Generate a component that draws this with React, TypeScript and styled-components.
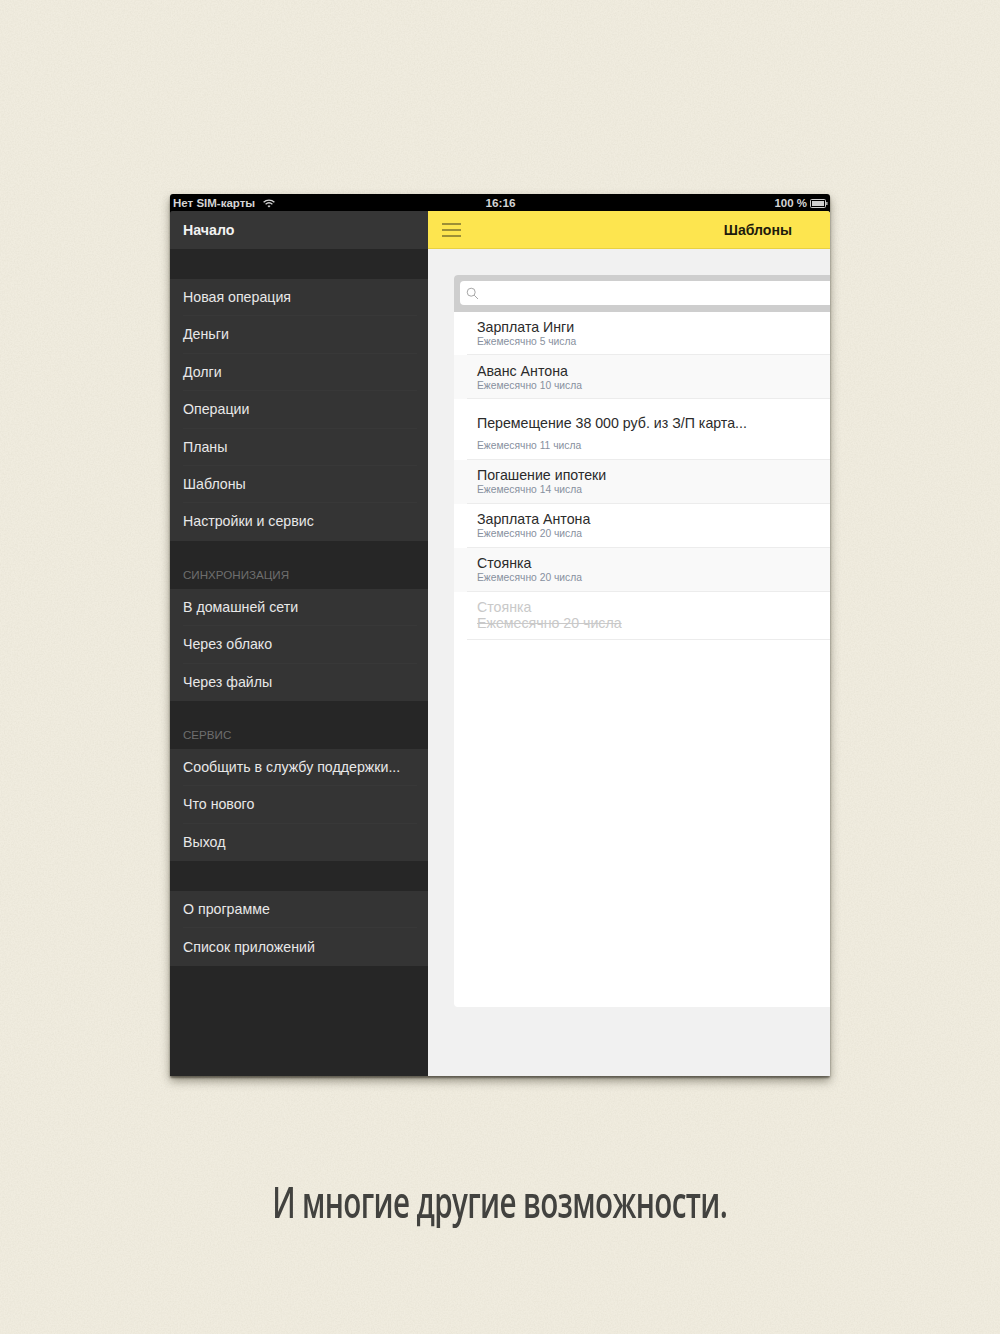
import React from "react";
import styled, { createGlobalStyle } from "styled-components";

const Global = createGlobalStyle`
  html, body { margin: 0; padding: 0; background: #f0ecdf; }
  * { box-sizing: border-box; }
  body { font-family: "Liberation Sans", Arial, sans-serif; -webkit-font-smoothing: antialiased; }
`;

const Page = styled.div`
  position: relative;
  width: 1000px;
  height: 1334px;
  overflow: hidden;
  padding-top: 194px;
  display: flex;
  flex-direction: column;
  align-items: center;
  background: #f0ecdf;
`;
const Paper = styled.svg`
  position: absolute;
  inset: 0;
  width: 1000px;
  height: 1334px;
  opacity: 0.22;
  pointer-events: none;
`;
const Device = styled.div`
  position: relative;
  width: 660px;
  height: 882px;
  display: flex;
  flex-direction: column;
  background: #000;
  border-radius: 3px 3px 2px 2px;
  box-shadow: 0 2px 2px rgba(40, 36, 25, 0.55), 0 5px 10px rgba(60, 55, 40, 0.5);
`;
const StatusBar = styled.div`
  height: 17px;
  flex: none;
  display: grid;
  grid-template-columns: 1fr auto 1fr;
  align-items: center;
  padding: 1px 2px 0 3px;
  color: #d4d4d4;
  font-size: 11.5px;
  font-weight: bold;
`;
const StatusLeft = styled.div`
  display: flex;
  align-items: center;
  gap: 8px;
`;
const StatusRight = styled.div`
  display: flex;
  align-items: center;
  justify-content: flex-end;
  gap: 3px;
`;
const Time = styled.div`
  font-size: 11.8px;
`;
const Body = styled.div`
  flex: 1;
  display: flex;
  min-height: 0;
`;
const Sidebar = styled.nav`
  width: 258px;
  flex: none;
  display: flex;
  flex-direction: column;
  background: #262626;
  border-radius: 3px 0 0 0;
  overflow: hidden;
`;
const SideHeader = styled.div`
  height: 38px;
  flex: none;
  display: flex;
  align-items: center;
  padding: 0 13px;
  background: #363636;
  color: #f2f2f2;
  font-size: 14.2px;
  font-weight: bold;
`;
const Spacer = styled.div`
  height: 30px;
  flex: none;
`;
const SectionLabel = styled.div`
  height: 48px;
  flex: none;
  display: flex;
  align-items: flex-end;
  padding: 0 13px 7px;
  color: #6e6e6e;
  font-size: 11.6px;
  line-height: 14px;
  text-transform: uppercase;
`;
const Group = styled.div`
  flex: none;
  background: #343434;
`;
const MenuItem = styled.div`
  height: 37.4px;
  display: flex;
  align-items: center;
  margin: 0 11px 0 13px;
  padding-bottom: 0.3px;
  color: #e8e8e8;
  font-size: 14.2px;
  border-bottom: 1px solid #383838;
  &:last-child { border-bottom-color: transparent; }
`;
const Main = styled.main`
  flex: 1;
  min-width: 0;
  display: flex;
  flex-direction: column;
  background: #f1f1f1;
  border-radius: 0 3px 0 0;
  overflow: hidden;
`;
const TopBar = styled.header`
  height: 38px;
  flex: none;
  display: flex;
  align-items: center;
  justify-content: space-between;
  padding: 0 38px 0 14px;
  background: #fde54f;
  border-bottom: 1px solid #e8d143;
`;
const TopTitle = styled.h1`
  margin: 0;
  color: #1d1b0c;
  font-size: 14.1px;
  font-weight: bold;
`;
const Menu = styled.svg`
  width: 19px;
  height: 14px;
  display: block;
`;
const Panel = styled.section`
  flex: none;
  height: 732px;
  margin: 26px 0 0 26px;
  background: #fff;
  border-radius: 4px 0 0 4px;
  overflow: hidden;
`;
const SearchBar = styled.div`
  height: 37px;
  padding: 6px 0 6px 6px;
  background: #cecece;
`;
const SearchField = styled.div`
  height: 24px;
  display: flex;
  align-items: center;
  padding-left: 6px;
  background: #fff;
  border-radius: 4px 0 0 4px;
`;
const Row = styled.div<{ $alt?: boolean; $h: number; $top: number }>`
  position: relative;
  height: ${(p) => p.$h}px;
  padding: ${(p) => p.$top}px 0 0 23px;
  background: ${(p) => (p.$alt ? "#f9f9f9" : "#fff")};
  &::after {
    content: "";
    position: absolute;
    left: 13px;
    right: 0;
    bottom: 0;
    height: 1px;
    background: #ececec;
  }
`;
const RowTitle = styled.div<{ $off?: boolean }>`
  color: ${(p) => (p.$off ? "#c9c9c9" : "#2b2b2b")};
  font-size: 14.2px;
  line-height: 16px;
`;
const RowSub = styled.div<{ $gap: number }>`
  margin-top: ${(p) => p.$gap}px;
  color: #87909e;
  font-size: 10.3px;
  line-height: 13px;
`;
const RowStruck = styled.div`
  color: #c9c9c9;
  font-size: 14.2px;
  line-height: 16px;
  text-decoration: line-through;
`;
const Caption = styled.div`
  position: relative;
  margin-top: 98px;
  color: #42423f;
  font-family: "Open Sans", sans-serif;
  font-size: 43px;
  font-weight: 600;
  line-height: 56px;
  white-space: nowrap;
  transform: scaleX(0.688);
  letter-spacing: -0.9px;
`;

const groups = {
  main: ["Новая операция", "Деньги", "Долги", "Операции", "Планы", "Шаблоны", "Настройки и сервис"],
  sync: ["В домашней сети", "Через облако", "Через файлы"],
  service: ["Сообщить в службу поддержки...", "Что нового", "Выход"],
  about: ["О программе", "Список приложений"],
};

const rows = [
  { t: "Зарплата Инги", s: "Ежемесячно 5 числа", h: 43, top: 7, gap: 0 },
  { t: "Аванс Антона", s: "Ежемесячно 10 числа", h: 44, top: 8, gap: 0, alt: true },
  { t: "Перемещение 38 000 руб. из З/П карта...", s: "Ежемесячно 11 числа", h: 61, top: 16, gap: 8 },
  { t: "Погашение ипотеки", s: "Ежемесячно 14 числа", h: 44, top: 7, gap: 0, alt: true },
  { t: "Зарплата Антона", s: "Ежемесячно 20 числа", h: 44, top: 7, gap: 0 },
  { t: "Стоянка", s: "Ежемесячно 20 числа", h: 44, top: 7, gap: 0, alt: true },
];

const Items = ({ list }: { list: string[] }) => (
  <Group>
    {list.map((x) => (
      <MenuItem key={x}>{x}</MenuItem>
    ))}
  </Group>
);

export default function App() {
  return (
    <Page>
      <Global />
      <Paper aria-hidden="true">
        <filter id="grain">
          <feTurbulence type="fractalNoise" baseFrequency="0.7" numOctaves="3" seed="4" />
          <feColorMatrix values="0 0 0 0 0.45  0 0 0 0 0.42  0 0 0 0 0.32  0.9 0 0 0 -0.3" />
        </filter>
        <rect width="1000" height="1334" filter="url(#grain)" />
      </Paper>
      <Device>
        <StatusBar>
          <StatusLeft>
            <span>Нет SIM-карты</span>
            <svg width="12" height="9" viewBox="0 0 12 9" fill="none" stroke="#d4d4d4">
              <path d="M.6 3.2C3.6.4 8.4.4 11.4 3.2" strokeWidth="1.3" />
              <path d="M2.6 5.2c2-1.7 4.8-1.7 6.8 0" strokeWidth="1.3" />
              <path d="M6 8.6 4.5 7c.9-.6 2.1-.6 3 0z" fill="#d4d4d4" stroke="none" />
            </svg>
          </StatusLeft>
          <Time>16:16</Time>
          <StatusRight>
            <span>100 %</span>
            <svg width="18" height="9" viewBox="0 0 18 9">
              <rect x=".5" y=".5" width="15" height="8" rx="1" fill="none" stroke="#cfcfcf" />
              <rect x="2" y="2" width="12" height="5" fill="#cfcfcf" />
              <rect x="16.2" y="3" width="1.3" height="3" fill="#cfcfcf" />
            </svg>
          </StatusRight>
        </StatusBar>
        <Body>
          <Sidebar>
            <SideHeader>Начало</SideHeader>
            <Spacer />
            <Items list={groups.main} />
            <SectionLabel>Синхронизация</SectionLabel>
            <Items list={groups.sync} />
            <SectionLabel>Сервис</SectionLabel>
            <Items list={groups.service} />
            <Spacer />
            <Items list={groups.about} />
          </Sidebar>
          <Main>
            <TopBar>
              <Menu viewBox="0 0 19 14">
                <path d="M0 1h19M0 7h19M0 13h19" stroke="#3f3b1c" strokeWidth="1.2" />
              </Menu>
              <TopTitle>Шаблоны</TopTitle>
            </TopBar>
            <Panel>
              <SearchBar>
                <SearchField>
                  <svg width="13" height="13" viewBox="0 0 13 13" fill="none" stroke="#a6a6a6" strokeWidth="1">
                    <circle cx="5.2" cy="5.2" r="4" />
                    <path d="M8.2 8.2l3.8 3.8" />
                  </svg>
                </SearchField>
              </SearchBar>
              {rows.map((r) => (
                <Row key={r.t} $alt={r.alt} $h={r.h} $top={r.top}>
                  <RowTitle>{r.t}</RowTitle>
                  <RowSub $gap={r.gap}>{r.s}</RowSub>
                </Row>
              ))}
              <Row $h={48} $top={7}>
                <RowTitle $off>Стоянка</RowTitle>
                <RowStruck>Ежемесячно 20 числа</RowStruck>
              </Row>
            </Panel>
          </Main>
        </Body>
      </Device>
      <Caption>И многие другие возможности.</Caption>
    </Page>
  );
}
